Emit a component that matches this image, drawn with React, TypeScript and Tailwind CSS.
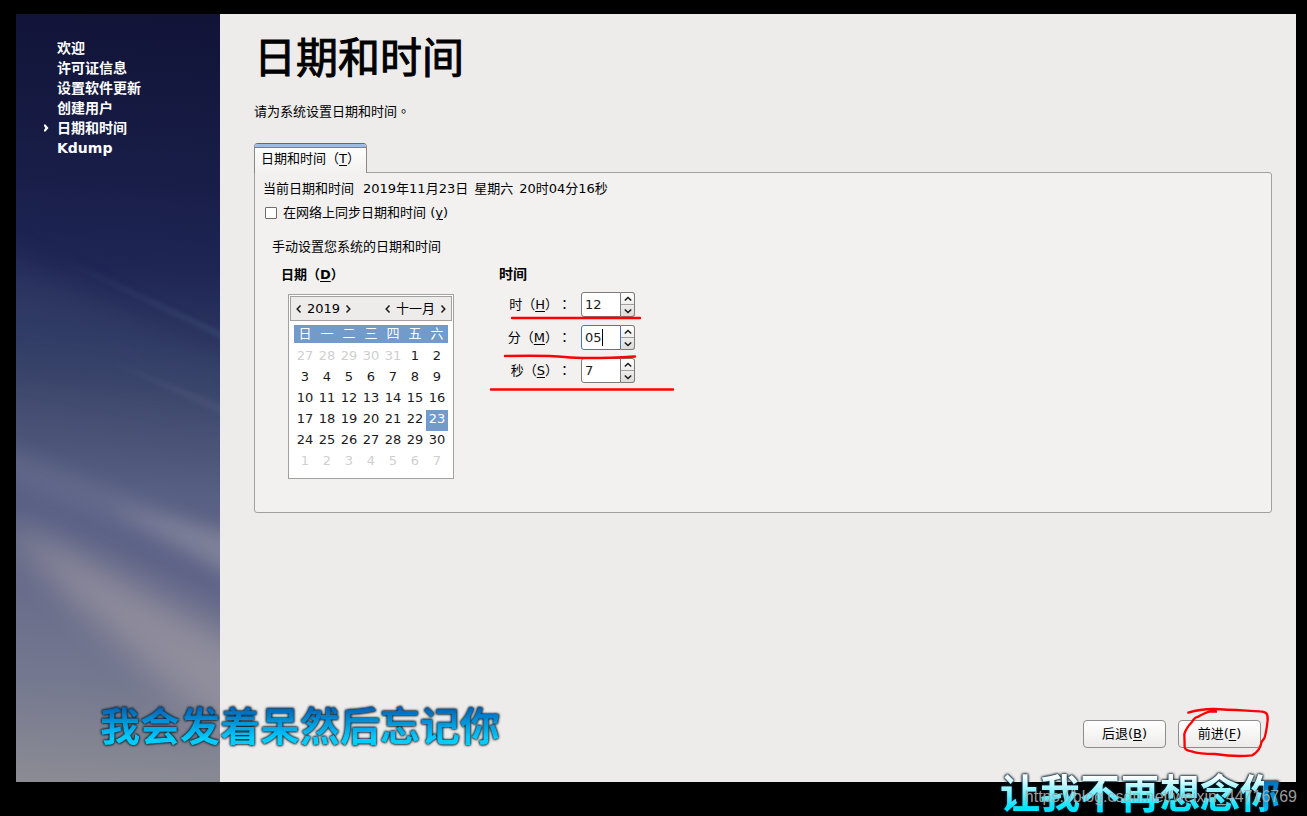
import React from "react";

const steps = ["欢迎", "许可证信息", "设置软件更新", "创建用户", "日期和时间", "Kdump"];
const currentStep = "日期和时间";

const weekdays = ["日", "一", "二", "三", "四", "五", "六"];

type Day = { n: number; outside?: boolean; selected?: boolean };

const weeks: Day[][] = (() => {
  const days: Day[] = [];
  for (let n = 27; n <= 31; n++) days.push({ n, outside: true });
  for (let n = 1; n <= 30; n++) days.push({ n, selected: n === 23 });
  for (let n = 1; n <= 7; n++) days.push({ n, outside: true });
  const rows: Day[][] = [];
  for (let i = 0; i < days.length; i += 7) rows.push(days.slice(i, i + 7));
  return rows;
})();

function Key({ children }: { children: string }) {
  return <span className="underline decoration-1 underline-offset-2">{children}</span>;
}

function Chevron({ dir }: { dir: "left" | "right" | "up" | "down" }) {
  const paths = {
    left: "M6.5 1.5 L3.2 5 L6.5 8.5",
    right: "M3.5 1.5 L6.8 5 L3.5 8.5",
    up: "M1.8 6.5 L5 3.5 L8.2 6.5",
    down: "M1.8 3.5 L5 6.5 L8.2 3.5",
  };
  return (
    <svg viewBox="0 0 10 10" className="block size-[10px] shrink-0" fill="none" stroke="#1a1a1a" strokeWidth="1.5" aria-hidden="true">
      <path d={paths[dir]} />
    </svg>
  );
}

function Sky() {
  return (
    <svg className="absolute inset-0 size-full" viewBox="0 0 204 768" preserveAspectRatio="none" aria-hidden="true">
      <defs>
        <linearGradient id="sky" gradientUnits="userSpaceOnUse" x1="110" y1="0" x2="60" y2="768">
          <stop offset="0" stopColor="#111437" />
          <stop offset="0.22" stopColor="#191e49" />
          <stop offset="0.33" stopColor="#1f2654" />
          <stop offset="0.42" stopColor="#2c3660" />
          <stop offset="0.5" stopColor="#404a6e" />
          <stop offset="0.62" stopColor="#586083" />
          <stop offset="0.74" stopColor="#676b8a" />
          <stop offset="0.86" stopColor="#73778f" />
          <stop offset="1" stopColor="#8a8b93" />
        </linearGradient>
        <filter id="beam" filterUnits="userSpaceOnUse" x="-150" y="150" width="520" height="700">
          <feGaussianBlur stdDeviation="16" />
        </filter>
        <filter id="soft" filterUnits="userSpaceOnUse" x="-150" y="150" width="520" height="700">
          <feGaussianBlur stdDeviation="9" />
        </filter>
        <filter id="fine" filterUnits="userSpaceOnUse" x="-50" y="150" width="320" height="400">
          <feGaussianBlur stdDeviation="2.5" />
        </filter>
      </defs>
      <rect width="204" height="768" fill="url(#sky)" />
      <path d="M-40 230 L60 275 L260 380 L260 400 L-40 340 Z" fill="#3b4670" opacity="0.35" filter="url(#beam)" />
      <path d="M40 243 L230 328 L230 337 Z" fill="#566790" opacity="0.24" filter="url(#fine)" />
      <path d="M90 345 L230 400 L230 412 Z" fill="#7a809c" opacity="0.13" filter="url(#fine)" />
      <path d="M-40 420 L260 540 L260 580 L-40 460 Z" fill="#8a8ba4" opacity="0.2" filter="url(#soft)" />
      <path d="M-40 445 L110 505 L260 590 L260 620 L110 540 L-40 485 Z" fill="#555a86" opacity="0.3" filter="url(#soft)" />
      <path d="M90 490 L260 530 L260 585 Z" fill="#9a98a8" opacity="0.45" filter="url(#soft)" />
      <path d="M-20 505 L60 540 L250 645 L250 740 L150 670 L60 590 Z" fill="#aaa2a8" opacity="0.55" filter="url(#beam)" />
    </svg>
  );
}

function Calendar() {
  return (
    <div className="ml-[7px] w-[166px] border border-[#a1a19f] bg-white p-px pb-[5px]">
      <div className="flex h-[25px] items-center justify-between border border-[#a1a19f] bg-[#edeceb] px-[3px]">
        <div className="flex items-center gap-[3px]">
          <button type="button" aria-label="上一年"><Chevron dir="left" /></button>
          <span>2019</span>
          <button type="button" aria-label="下一年"><Chevron dir="right" /></button>
        </div>
        <div className="flex items-center gap-[3px]">
          <button type="button" aria-label="上一月"><Chevron dir="left" /></button>
          <span>十一月</span>
          <button type="button" aria-label="下一月"><Chevron dir="right" /></button>
        </div>
      </div>
      <table className="mx-[4px] mt-[4px] w-[154px] table-fixed border-collapse text-center">
        <thead>
          <tr>
            {weekdays.map((d) => (
              <th key={d} scope="col" className="h-[18px] bg-[#729aca] p-0 leading-[18px] font-normal text-white">{d}</th>
            ))}
          </tr>
        </thead>
        <tbody className="border-t-4 border-white">
          {weeks.map((week, i) => (
            <tr key={i}>
              {week.map((d) => (
                <td
                  key={d.n}
                  className={
                    "h-[21px] p-0 pb-1 leading-[17px] " +
                    (d.selected ? "bg-[#729aca] text-white" : d.outside ? "text-[#cfcfcf]" : "text-[#1a1a1a]")
                  }
                >
                  {d.n}
                </td>
              ))}
            </tr>
          ))}
        </tbody>
      </table>
    </div>
  );
}

function Spin({ id, name, k, value, focused }: { id: string; name: string; k: string; value: string; focused?: boolean }) {
  return (
    <div className="flex h-[25px] items-center gap-[10px]">
      <label htmlFor={id} className="w-[72px] text-right whitespace-nowrap [text-spacing-trim:space-all]">
        {name}（<Key>{k}</Key>）<span lang="zh-TW" className="font-['Noto_Sans_CJK_TC',sans-serif]">：</span>
      </label>
      <div className="relative flex h-[25px] w-[54px]">
        <input
          id={id}
          defaultValue={value}
          className={
            "h-full w-[40px] rounded-l-[3px] border bg-white pl-[3px] text-[13px] text-[#1a1a1a] outline-none " +
            (focused ? "border-[#4a76ae]" : "border-[#7d7c7a]")
          }
        />
        {focused && <span className="absolute top-1 left-[21px] h-[17px] w-px bg-black" />}
        <div className="flex flex-1 flex-col rounded-r-[3px] border border-l-0 border-[#7d7c7a] bg-linear-to-b from-white to-[#dddcda]">
          <button type="button" aria-label={name + "增加"} className="flex flex-1 items-center justify-center border-b border-[#a1a09e]">
            <Chevron dir="up" />
          </button>
          <button type="button" aria-label={name + "减少"} className="flex flex-1 items-center justify-center">
            <Chevron dir="down" />
          </button>
        </div>
      </div>
    </div>
  );
}

function NavButton({ text, k }: { text: string; k: string }) {
  return (
    <button
      type="button"
      className="h-[28px] w-[83px] rounded-[4px] border border-[#8e8d8b] bg-linear-to-b from-white to-[#ecebea]"
    >
      {text}(<Key>{k}</Key>)
    </button>
  );
}

export default function App() {
  return (
    <div className="relative flex min-h-screen overflow-hidden bg-black pt-[14px] pr-[11px] pb-[34px] pl-4 font-['DejaVu_Sans','Noto_Sans_CJK_SC',sans-serif] text-[13px] leading-5 text-black">
      <aside className="relative w-[204px] shrink-0 bg-[#191e49]">
        <Sky />
        <ol className="relative pt-6 pl-[27px] text-[14px] font-bold text-white">
          {steps.map((s) => (
            <li key={s} className="flex h-5 items-center" aria-current={s === currentStep ? "step" : undefined}>
              <span className="w-[14px]">
                {s === currentStep && (
                  <svg viewBox="0 0 6 8" className="h-2 w-1.5" fill="#fff" aria-hidden="true">
                    <path d="M1 0.5 L2.5 0.5 L5.5 4 L2.5 7.5 L1 7.5 L1 6 L2.3 4 L1 2 Z" />
                  </svg>
                )}
              </span>
              {s}
            </li>
          ))}
        </ol>
      </aside>

      <main className="flex flex-1 flex-col bg-[#edeceb] pt-6 pr-6 pb-[34px] pl-[34px]">
        <h1 className="pt-px text-[42px] leading-10 font-normal [-webkit-text-stroke:1px_#000]">日期和时间</h1>
        <p className="mt-[22px]">
          请为系统设置日期和时间<span lang="zh-TW" className="font-['Noto_Sans_CJK_TC',sans-serif]">。</span>
        </p>

        <div className="mt-[21px]" role="tablist">
          <button
            type="button"
            role="tab"
            aria-selected="true"
            className="relative -mb-px flex h-[30px] items-center overflow-hidden rounded-t-[4px] border border-b-0 border-[#8a8987] border-t-[#4a6f9f] bg-linear-to-b from-white to-[#f2f1f0] px-[6px] whitespace-nowrap"
          >
            <span className="absolute inset-x-0 top-0 h-1 border-b border-[#5f86ba] bg-[#9dbbe3]" />
            日期和时间（<Key>T</Key>）
          </button>
        </div>
        <section className="rounded-[3px] rounded-tl-none border border-[#a1a09e] bg-[#f2f1f0] px-2 pt-[6px] pb-[33px]">
          <p className="flex gap-[9px]">
            <span>当前日期和时间</span>
            <span className="flex gap-[6px]">
              <span>2019年11月23日</span>
              <span>星期六</span>
              <span>20时04分16秒</span>
            </span>
          </p>
          <label className="mt-1 flex w-fit items-center gap-[6px] pl-[2px]">
            <input type="checkbox" className="size-3 appearance-none rounded-[1px] border border-[#6f6e6c] bg-white" />
            <span>在网络上同步日期和时间 (<Key>y</Key>)</span>
          </label>
          <p className="mt-[14px] pl-[9px]">手动设置您系统的日期和时间</p>

          <div className="mt-[7px] flex gap-[45px] pl-[18px]">
            <div>
              <h2 className="mb-[9px] pt-px font-bold">日期（<Key>D</Key>）</h2>
              <Calendar />
            </div>
            <div className="relative">
              <h2 className="mb-2 text-[14px] font-bold">时间</h2>
              <div className="flex flex-col gap-2">
                <Spin id="hour" name="时" k="H" value="12" />
                <Spin id="minute" name="分" k="M" value="05" focused />
                <Spin id="second" name="秒" k="S" value="7" />
              </div>
              <svg
                className="pointer-events-none absolute top-[50px] -left-[10px] h-20 w-[190px]"
                viewBox="489 314 190 80"
                fill="none"
                stroke="#ff0000"
                strokeWidth="2.4"
                strokeLinecap="round"
                aria-hidden="true"
              >
                <path d="M512 318 H640" />
                <path d="M505 356 C530 355.5 550 355.5 565 357 S600 358.5 635 356.5" />
                <path d="M491 389.5 H673" />
              </svg>
            </div>
          </div>
        </section>

        <div className="mt-auto flex justify-end gap-3 pt-6 pr-[11px]">
          <NavButton text="后退" k="B" />
          <div className="relative">
            <NavButton text="前进" k="F" />
            <svg
              className="pointer-events-none absolute -top-[14px] left-[2px] h-[53px] w-[91px]"
              viewBox="600 48 273 159"
              fill="none"
              stroke="#ff0000"
              strokeWidth="7"
              strokeLinecap="round"
              strokeLinejoin="round"
              aria-hidden="true"
            >
              <path d="M625 68 C650 60 670 57 700 57 C750 59 800 62 840 64 C860 64 864 72 863 90 C861 110 858 130 853 145 L845 155 C842 172 832 188 816 196 C790 199 750 199 705 192 C680 192 655 191 635 184 C622 182 615 180 614 172 L613 132 C618 115 628 104 636 96 C640 88 646 82 655 80 C668 73 680 65 690 65 L708 65" />
            </svg>
          </div>
        </div>
      </main>

      <p className="pointer-events-none absolute bottom-[68px] left-[100px] bg-linear-to-b from-[#0060b4] from-15% to-[#00ccff] to-80% bg-clip-text font-['Noto_Sans_CJK_SC',sans-serif] text-[40px] leading-[48px] font-bold whitespace-nowrap text-transparent [filter:drop-shadow(0_0_1px_#10202a)_drop-shadow(0_0_1px_#10202a)]">
        我会发着呆然后忘记你
      </p>
      <p className="pointer-events-none absolute right-[27px] bottom-px bg-[linear-gradient(to_bottom,#ffffff_20%,#00e4ff_85%),linear-gradient(to_bottom,#0060b4_15%,#00b4f0_85%)] bg-[length:264px_100%,100%_100%] bg-no-repeat bg-clip-text font-['Noto_Sans_CJK_SC',sans-serif] text-[40px] leading-[48px] font-bold whitespace-nowrap text-transparent [filter:drop-shadow(0_0_1px_#10202a)_drop-shadow(0_0_1px_#10202a)]">
        让我不再想念你
      </p>
      <p className="pointer-events-none absolute right-[10px] bottom-[9px] font-['Liberation_Sans',sans-serif] text-[16px] whitespace-nowrap text-[#b0b0b0]/90">
        https://blog.csdn.net/weixin_44716769
      </p>
    </div>
  );
}
